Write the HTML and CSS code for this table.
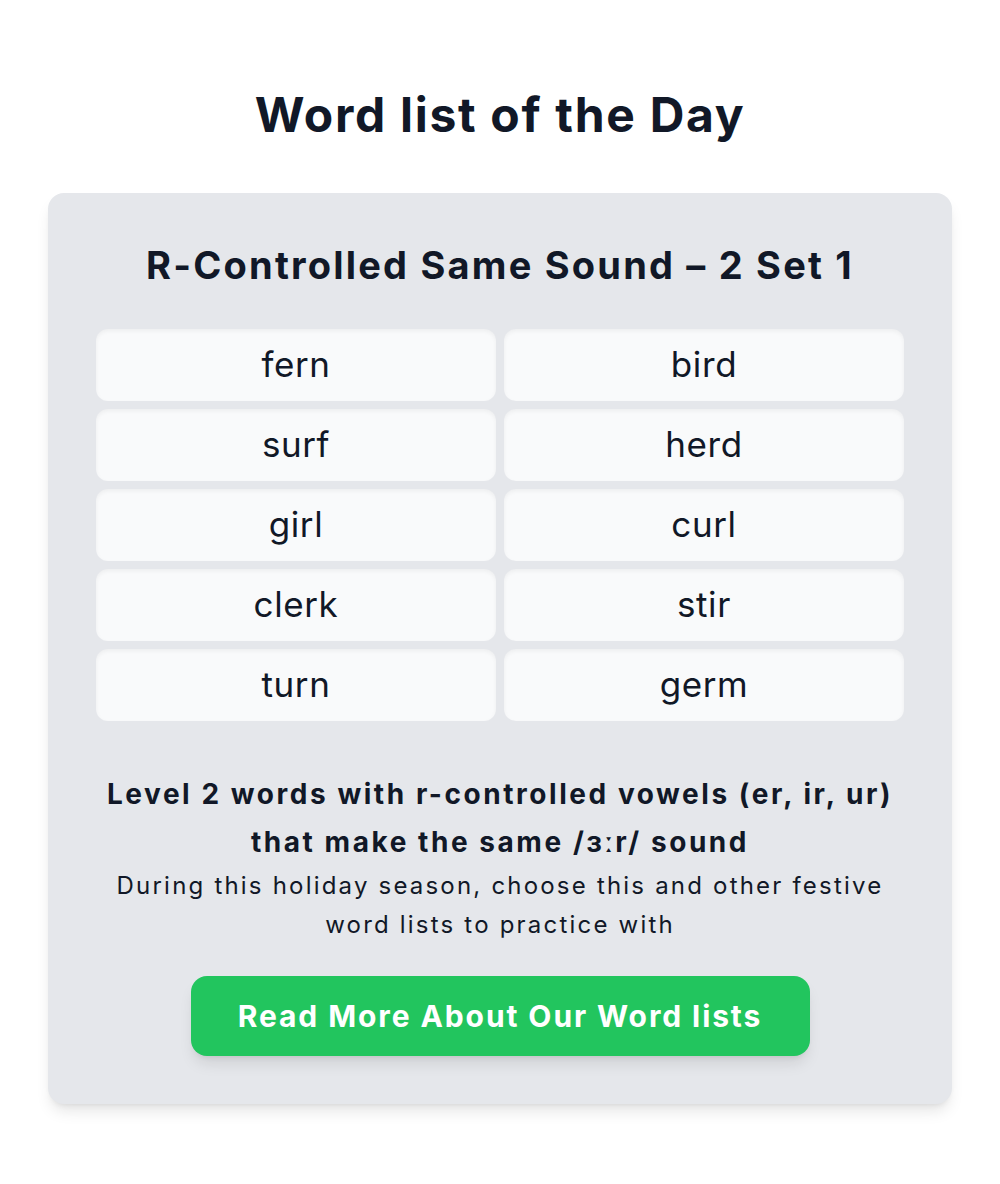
FILE: index.html
```html
<!DOCTYPE html>
<html lang="en">
<head>
<meta charset="utf-8">
<title>Word list of the Day</title>
<link rel="stylesheet" href="styles.css">
</head>
<body>
<main class="page">
  <h1 class="page-title">Word list of the Day</h1>
  <section class="card">
    <h2 class="card-title">R-Controlled Same Sound – 2 Set 1</h2>
    <ul class="words">
      <li class="word">fern</li>
      <li class="word">bird</li>
      <li class="word">surf</li>
      <li class="word">herd</li>
      <li class="word">girl</li>
      <li class="word">curl</li>
      <li class="word">clerk</li>
      <li class="word">stir</li>
      <li class="word">turn</li>
      <li class="word">germ</li>
    </ul>
    <p class="summary">Level 2 words with r-controlled vowels (er, ir, ur) that make the same /ɜːr/ sound</p>
    <p class="note">During this holiday season, choose this and other festive word lists to practice with</p>
    <a class="cta" href="#">Read More About Our Word lists</a>
  </section>
</main>
</body>
</html>
```
FILE: styles.css
```css
* { box-sizing: border-box; }
html, body { margin: 0; padding: 0; background: #ffffff; }
body {
  font-family: Inter, "Noto Sans", sans-serif;
  color: #111827;
}
.page {
  padding: 85px 48px 80px;
}
.page-title {
  margin: 0 0 48px;
  text-align: center;
  font-size: 48px;
  line-height: 60px;
  font-weight: 700;
  letter-spacing: 1.7px;
}
.card {
  background: #e5e7eb;
  border-radius: 16px;
  padding: 48px;
  box-shadow: 0 10px 15px -3px rgba(0,0,0,0.1), 0 4px 6px -4px rgba(0,0,0,0.1);
  display: flex;
  flex-direction: column;
  align-items: center;
}
.card-title {
  margin: 0 0 44px;
  padding-top: 4px;
  text-align: center;
  font-size: 38px;
  line-height: 40px;
  font-weight: 700;
  letter-spacing: 2.2px;
}
.words {
  list-style: none;
  margin: 0;
  padding: 0;
  width: 100%;
  display: grid;
  grid-template-columns: 1fr 1fr;
  gap: 8px;
}
.word {
  background: #f9fafb;
  border-radius: 12px;
  height: 72px;
  display: flex;
  align-items: center;
  justify-content: center;
  padding-bottom: 2px;
  font-size: 35px;
  font-weight: 400;
  letter-spacing: 0.6px;
  box-shadow: inset 0 2px 4px rgba(0,0,0,0.05);
}
.summary {
  margin: 49px 0 0;
  text-align: center;
  font-size: 28px;
  line-height: 48px;
  font-weight: 700;
  letter-spacing: 2.55px;
}
.note {
  margin: 0;
  text-align: center;
  font-size: 24px;
  line-height: 39px;
  font-weight: 400;
  letter-spacing: 2.2px;
}
.cta {
  margin-top: 32px;
  display: flex;
  align-items: center;
  justify-content: center;
  width: 619px;
  height: 80px;
  background: #22c55e;
  color: #ffffff;
  border-radius: 16px;
  text-decoration: none;
  font-size: 30px;
  font-weight: 700;
  letter-spacing: 1.9px;
  box-shadow: 0 10px 15px -3px rgba(0,0,0,0.1), 0 4px 6px -4px rgba(0,0,0,0.1);
}
```
